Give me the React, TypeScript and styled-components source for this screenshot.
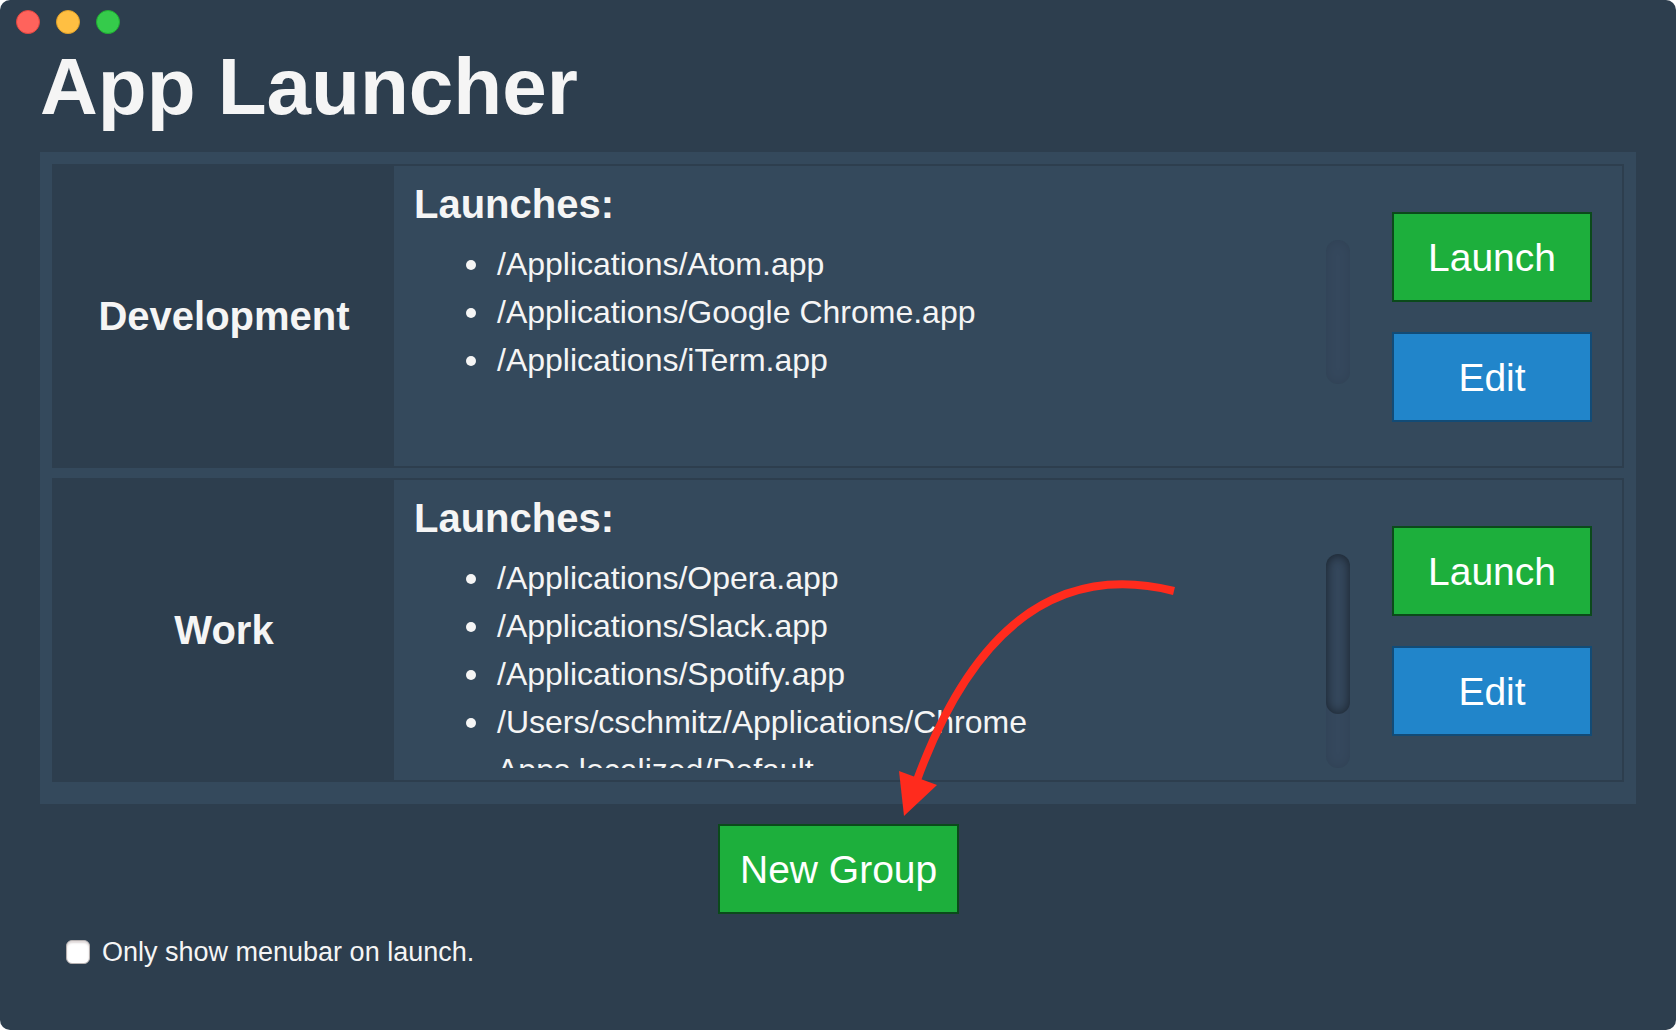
import React, { useState } from "react";
import styled, { createGlobalStyle } from "styled-components";

const color = {
  base: "#2d3e4e",
  panel: "#34495c",
  text: "#f5f5f5",
  green: "#1daf3c",
  greenEdge: "#0b4a1b",
  blue: "#2185ca",
  blueEdge: "#124b76",
  arrow: "#ff2b1d",
};

const GlobalStyle = createGlobalStyle`
  *, *::before, *::after { box-sizing: border-box; }
  body {
    margin: 0;
    background: #ffffff;
    color: ${color.text};
    font-family: "Liberation Sans", Helvetica, Arial, sans-serif;
  }
`;

const Window = styled.div`
  min-height: 100vh;
  background: ${color.base};
  border-radius: 10px;
  overflow: hidden;
`;

const TitleBar = styled.div`
  display: flex;
  gap: 16px;
  padding: 10px 16px 5px;
`;

const WindowButton = styled.button<{ $fill: string; $edge: string }>`
  width: 24px;
  height: 24px;
  padding: 0;
  border: 1px solid ${(p) => p.$edge};
  border-radius: 50%;
  background: ${(p) => p.$fill};
`;

const Content = styled.main`
  padding: 0 40px 40px;
`;

const Title = styled.h1`
  margin: 0 0 17px;
  font-size: 80px;
  line-height: 96px;
`;

const Groups = styled.section`
  display: flex;
  flex-direction: column;
  gap: 10px;
  padding: 12px 12px 22px;
  background: ${color.panel};
`;

const Group = styled.article`
  display: flex;
  min-height: 304px;
  border: 2px solid ${color.base};
`;

const GroupName = styled.h2`
  display: flex;
  flex: 0 0 340px;
  align-items: center;
  justify-content: center;
  margin: 0;
  background: ${color.base};
  font-size: 40px;
  line-height: 48px;
`;

const Launches = styled.div`
  flex: 1;
  min-width: 0;
  padding: 14px 42px 12px 20px;
`;

const LaunchesTitle = styled.h3`
  margin: 0 0 12px;
  font-size: 40px;
  line-height: 48px;
`;

const ScrollArea = styled.div`
  display: flex;
  max-height: 214px;
  overflow: hidden;
`;

const AppList = styled.ul`
  flex: 1;
  min-width: 0;
  margin: 0;
  padding: 0 0 0 52px;
  font-size: 32px;
  line-height: 48px;
  list-style: none;
`;

const AppItem = styled.li`
  display: flex;
  gap: 21px;

  &::before {
    content: "";
    flex: 0 0 10px;
    height: 10px;
    margin-top: 20px;
    border-radius: 50%;
    background: ${color.text};
  }
`;

const Track = styled.div`
  flex: 0 0 24px;
  border-radius: 12px;
  background: #35485d;
  box-shadow: inset 0 0 12px rgba(0, 0, 0, 0.1);
`;

const Thumb = styled.div`
  height: 160px;
  border-radius: 12px;
  box-shadow: inset 0 0 12px rgba(0, 0, 0, 0.5);
`;

const Actions = styled.div`
  display: flex;
  flex: 0 0 230px;
  flex-direction: column;
  gap: 30px;
  padding: 46px 30px 0 0;
`;

const Button = styled.button<{ $tone?: "green" | "blue" }>`
  height: 90px;
  padding: 2px 20px 0;
  border: 2px solid ${(p) => (p.$tone === "blue" ? color.blueEdge : color.greenEdge)};
  background: ${(p) => (p.$tone === "blue" ? color.blue : color.green)};
  color: #ffffff;
  font-family: inherit;
  font-size: 39px;
  line-height: 48px;
  white-space: nowrap;
`;

const NewGroup = styled.div`
  position: relative;
  display: grid;
  width: 240px;
  margin: 20px auto 24px;
`;

const Arrow = styled.svg`
  position: absolute;
  left: 172px;
  bottom: 88px;
  pointer-events: none;
`;

const Option = styled.label`
  display: flex;
  align-items: center;
  gap: 12px;
  width: fit-content;
  margin-left: 26px;
  font-size: 27px;
  line-height: 28px;
`;

const Checkbox = styled.input`
  appearance: none;
  width: 24px;
  height: 24px;
  margin: 0;
  border: 1px solid #b5b0b0;
  border-radius: 6px;
  background: #ffffff;
  box-shadow: inset 0 2px 2px rgba(90, 60, 60, 0.2);

  &:checked {
    background: ${color.blue};
  }
`;

type LaunchGroup = { name: string; apps: string[]; scrolls: boolean };

const groups: LaunchGroup[] = [
  {
    name: "Development",
    apps: ["/Applications/Atom.app", "/Applications/Google Chrome.app", "/Applications/iTerm.app"],
    scrolls: false,
  },
  {
    name: "Work",
    apps: [
      "/Applications/Opera.app",
      "/Applications/Slack.app",
      "/Applications/Spotify.app",
      "/Users/cschmitz/Applications/Chrome Apps.localized/Default",
    ],
    scrolls: true,
  },
];

function GroupRow({ group }: { group: LaunchGroup }) {
  return (
    <Group>
      <GroupName>{group.name}</GroupName>
      <Launches>
        <LaunchesTitle>Launches:</LaunchesTitle>
        <ScrollArea>
          <AppList>
            {group.apps.map((app) => (
              <AppItem key={app}>{app}</AppItem>
            ))}
          </AppList>
          <Track>{group.scrolls && <Thumb />}</Track>
        </ScrollArea>
      </Launches>
      <Actions>
        <Button type="button">Launch</Button>
        <Button type="button" $tone="blue">
          Edit
        </Button>
      </Actions>
    </Group>
  );
}

export default function App() {
  const [menubarOnly, setMenubarOnly] = useState(false);

  return (
    <>
      <GlobalStyle />
      <Window>
        <TitleBar>
          <WindowButton type="button" aria-label="Close" $fill="#ff635c" $edge="#e2463f" />
          <WindowButton type="button" aria-label="Minimize" $fill="#ffbf42" $edge="#e0a028" />
          <WindowButton type="button" aria-label="Zoom" $fill="#35cb4b" $edge="#1fae31" />
        </TitleBar>
        <Content>
          <Title>App Launcher</Title>
          <Groups>
            {groups.map((group) => (
              <GroupRow key={group.name} group={group} />
            ))}
          </Groups>
          <NewGroup>
            <Button type="button">New Group</Button>
            <Arrow width="294" height="256" viewBox="890 570 294 256" aria-hidden="true">
              <path d="M1174 591Q1002 548 917 780" fill="none" stroke={color.arrow} strokeWidth="8" />
              <path d="M899 771L937 785L904 816Z" fill={color.arrow} />
            </Arrow>
          </NewGroup>
          <Option htmlFor="menubar-only">
            <Checkbox
              id="menubar-only"
              type="checkbox"
              checked={menubarOnly}
              onChange={(e) => setMenubarOnly(e.target.checked)}
            />
            Only show menubar on launch.
          </Option>
        </Content>
      </Window>
    </>
  );
}
